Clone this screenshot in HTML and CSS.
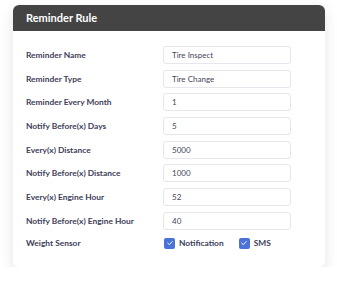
FILE: index.html
```html
<!DOCTYPE html>
<html lang="en">
<head>
    <meta charset="UTF-8">
    <meta name="viewport" content="width=device-width, initial-scale=1.0">
    <title>Reminder Rule</title>
    <link rel="stylesheet" href="styles.css">
</head>
<body>

    <!-- Tarjeta de regla -->
    <div class="card">
        <div class="card-header">Reminder Rule</div>

        <div class="card-body">
            <div class="row">
                <label class="label">Reminder Name</label>
                <div class="field">Tire Inspect</div>
            </div>
            <div class="row">
                <label class="label">Reminder Type</label>
                <div class="field">Tire Change</div>
            </div>
            <div class="row">
                <label class="label">Reminder Every Month</label>
                <div class="field">1</div>
            </div>
            <div class="row">
                <label class="label">Notify Before(x) Days</label>
                <div class="field">5</div>
            </div>
            <div class="row">
                <label class="label">Every(x) Distance</label>
                <div class="field">5000</div>
            </div>
            <div class="row">
                <label class="label">Notify Before(x) Distance</label>
                <div class="field">1000</div>
            </div>
            <div class="row">
                <label class="label">Every(x) Engine Hour</label>
                <div class="field">52</div>
            </div>
            <div class="row">
                <label class="label">Notify Before(x) Engine Hour</label>
                <div class="field">40</div>
            </div>
            <div class="row row-check">
                <label class="label">Weight Sensor</label>
                <div class="checks">
                    <span class="check"><span class="box"><svg viewBox="0 0 10 10" width="8" height="8"><path d="M2.2 5.2 L4.2 7 L7.8 3.2" fill="none" stroke="#fff" stroke-width="1.2" stroke-linecap="round" stroke-linejoin="round"/></svg></span>Notification</span>
                    <span class="check"><span class="box"><svg viewBox="0 0 10 10" width="8" height="8"><path d="M2.2 5.2 L4.2 7 L7.8 3.2" fill="none" stroke="#fff" stroke-width="1.2" stroke-linecap="round" stroke-linejoin="round"/></svg></span>SMS</span>
                </div>
            </div>
        </div>
    </div>

</body>
</html>
```

FILE: styles.css
```css
/* Estilos generales */
* {
    margin: 0;
    padding: 0;
    box-sizing: border-box;
    font-family: 'Lato', 'Open Sans', sans-serif;
}

body {
    background-color: #fff;
    padding: 5px 12px 0 13px;
}

/* Tarjeta */
.card {
    width: 312px;
    background-color: #fff;
    border-radius: 6px;
    box-shadow: 0 5px 14px rgba(40, 40, 60, 0.13);
    overflow: hidden;
}

.card-header {
    background-color: #444445;
    color: #fff;
    font-size: 11px;
    font-weight: 700;
    height: 26px;
    line-height: 26px;
    padding-left: 13px;
}

.card-body {
    padding: 15px 13px 17px 13px;
    display: flex;
    flex-direction: column;
    gap: 5.7px;
}

.row {
    display: grid;
    grid-template-columns: 137px 128px;
    align-items: center;
}

.label {
    font-size: 8.4px;
    font-weight: 700;
    color: #3d3d58;
}

.field {
    height: 18px;
    border: 1px solid #e6e6ec;
    border-radius: 3px;
    padding-left: 8px;
    font-size: 8px;
    line-height: 16px;
    color: #45455a;
}

.row-check {
    height: 13px;
    margin-top: 1px;
}

.checks {
    display: flex;
    gap: 15px;
    padding-left: 1px;
}

.check {
    display: flex;
    align-items: center;
    gap: 4px;
    font-size: 8.4px;
    font-weight: 700;
    color: #3d3d58;
}

.box {
    width: 11px;
    height: 11px;
    border-radius: 2px;
    background-color: #4a72d8;
    display: flex;
    align-items: center;
    justify-content: center;
}
```
